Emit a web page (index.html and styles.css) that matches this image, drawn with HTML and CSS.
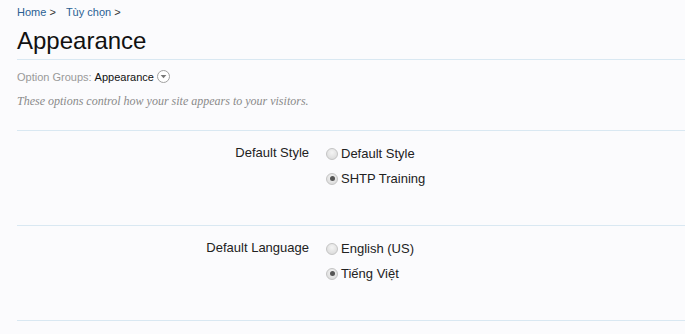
FILE: index.html
```html
<!DOCTYPE html>
<html lang="vi">
<head>
  <meta charset="UTF-8" />
  <title>Appearance</title>
  <link rel="stylesheet" href="styles.css">
</head>
<body>
  <div class="page">
    <div class="breadcrumb">
      <a href="#">Home</a> &gt;
      <a href="#" class="crumb">Tùy chọn</a> &gt;
    </div>
    <h1 class="title">Appearance</h1>

    <div class="groups">
      Option Groups: <span class="current">Appearance</span>
      <span class="drop">
        <svg width="13" height="13" viewBox="0 0 13 13">
          <circle cx="6.5" cy="6.5" r="6" fill="#fff" stroke="#a0a0a0"/>
          <path d="M3.6 5 L9.4 5 L6.5 8.3 Z" fill="#777"/>
        </svg>
      </span>
    </div>
    <p class="desc">These options control how your site appears to your visitors.</p>

    <div class="option-row">
      <div class="label">Default Style</div>
      <div class="choices">
        <label class="choice"><input type="radio" name="style"> Default Style</label>
        <label class="choice"><input type="radio" name="style" checked> SHTP Training</label>
      </div>
    </div>

    <div class="option-row">
      <div class="label">Default Language</div>
      <div class="choices">
        <label class="choice"><input type="radio" name="lang"> English (US)</label>
        <label class="choice"><input type="radio" name="lang" checked> Tiếng Việt</label>
      </div>
    </div>
  </div>
</body>
</html>
```

FILE: styles.css
```css
body {
  margin: 0;
  background-color: #fbfbfd;
  font-family: "Liberation Sans", Arial, sans-serif;
  color: #222;
}

.page {
  padding: 6px 0 0 17px;
}

.breadcrumb {
  font-size: 11px;
  color: #333;
  height: 14px;
}

.breadcrumb a {
  color: #2a5f93;
  text-decoration: none;
}

.breadcrumb .crumb {
  margin-left: 7px;
}

.title {
  font-size: 24px;
  font-weight: normal;
  color: #111;
  margin: 7px 0 0 0;
  padding-bottom: 4px;
  border-bottom: 1px solid #d9e8f2;
}

.groups {
  margin-top: 10px;
  font-size: 11px;
  color: #999;
  display: flex;
  align-items: center;
  gap: 3px;
}

.groups .current {
  color: #111;
}

.drop {
  display: flex;
}

.desc {
  margin: 11px 0 0 0;
  padding-bottom: 21px;
  font-family: "Liberation Serif", "Times New Roman", serif;
  font-style: italic;
  font-size: 12px;
  color: #8a8a8a;
  border-bottom: 1px solid #d9e8f2;
}

.option-row {
  display: grid;
  grid-template-columns: 292px 1fr;
  column-gap: 17px;
  padding: 14px 0 0 0;
  height: 80px;
  border-bottom: 1px solid #d9e8f2;
  font-size: 13px;
}

.label {
  text-align: right;
  color: #222;
}

.choices {
  display: flex;
  flex-direction: column;
  gap: 8px;
}

.choice {
  display: flex;
  align-items: center;
  gap: 2px;
  color: #222;
  height: 17px;
}

.choice input {
  appearance: none;
  margin: 0 1px 0 0;
  width: 12px;
  height: 12px;
  border-radius: 50%;
  border: 1px solid #c4c4c4;
  background: radial-gradient(circle at 50% 35%, #f4f4f4, #d6d6d6);
  box-sizing: border-box;
  display: grid;
  place-items: center;
}

.choice input:checked::after {
  content: "";
  width: 5px;
  height: 5px;
  border-radius: 50%;
  background: #555;
}
```
